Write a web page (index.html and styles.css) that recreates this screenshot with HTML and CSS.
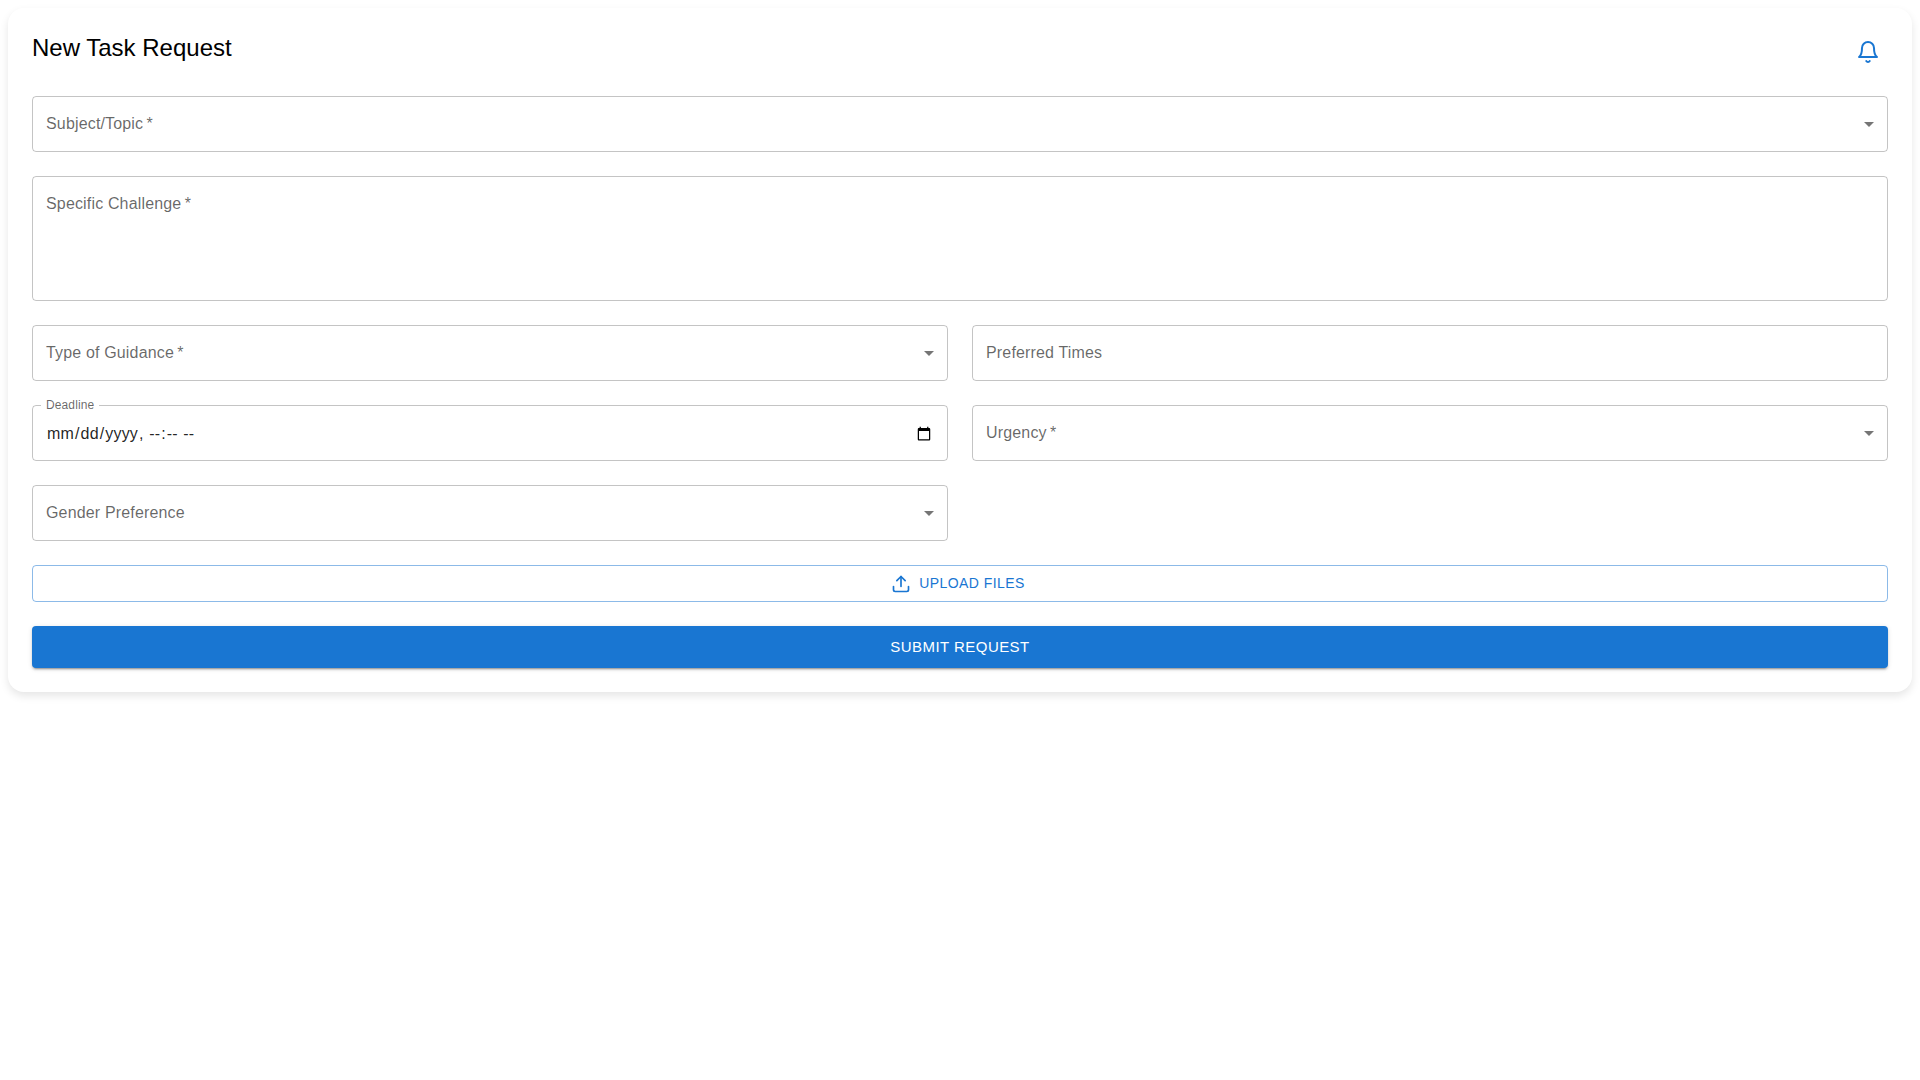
FILE: index.html
```html
<!DOCTYPE html>
<html lang="en">
<head>
  <meta charset="UTF-8">
  <meta name="viewport" content="width=device-width, initial-scale=1.0">
  <title>New Task Request</title>
  <link rel="stylesheet" href="styles.css">
</head>
<body>
  <main class="card">
    <header class="card-header">
      <h1>New Task Request</h1>
      <button type="button" class="icon-button" aria-label="Notifications">
        <svg width="24" height="24" viewBox="0 0 24 24" fill="none" stroke="currentColor" stroke-width="2" stroke-linecap="round" stroke-linejoin="round">
          <path d="M18 8A6 6 0 0 0 6 8c0 7-3 9-3 9h18s-3-2-3-9"/>
          <path d="M13.73 21a2 2 0 0 1-3.46 0"/>
        </svg>
      </button>
    </header>

    <form class="task-form">
      <div class="field wide">
        <label for="subject">Subject/Topic&thinsp;*</label>
        <select id="subject" required>
          <option value=""></option>
        </select>
        <svg class="arrow" viewBox="0 0 24 24"><path d="M7 10l5 5 5-5z"/></svg>
      </div>

      <div class="field wide">
        <label for="challenge">Specific Challenge&thinsp;*</label>
        <textarea id="challenge" required></textarea>
      </div>

      <div class="field">
        <label for="guidance">Type of Guidance&thinsp;*</label>
        <select id="guidance" required>
          <option value=""></option>
        </select>
        <svg class="arrow" viewBox="0 0 24 24"><path d="M7 10l5 5 5-5z"/></svg>
      </div>

      <div class="field">
        <label for="times">Preferred Times</label>
        <input type="text" id="times">
      </div>

      <div class="field">
        <label for="deadline" class="shrink">Deadline</label>
        <input type="datetime-local" id="deadline">
      </div>

      <div class="field">
        <label for="urgency">Urgency&thinsp;*</label>
        <select id="urgency" required>
          <option value=""></option>
        </select>
        <svg class="arrow" viewBox="0 0 24 24"><path d="M7 10l5 5 5-5z"/></svg>
      </div>

      <div class="field">
        <label for="gender">Gender Preference</label>
        <select id="gender">
          <option value=""></option>
        </select>
        <svg class="arrow" viewBox="0 0 24 24"><path d="M7 10l5 5 5-5z"/></svg>
      </div>

      <button type="button" class="btn btn-outlined wide">
        <svg width="20" height="20" viewBox="0 0 24 24" fill="none" stroke="currentColor" stroke-width="2" stroke-linecap="round" stroke-linejoin="round">
          <path d="M21 15v4a2 2 0 0 1-2 2H5a2 2 0 0 1-2-2v-4"/>
          <path d="M17 8l-5-5-5 5"/>
          <path d="M12 3v12"/>
        </svg>
        Upload Files
      </button>

      <button type="submit" class="btn btn-contained wide">Submit Request</button>
    </form>
  </main>
</body>
</html>
```
FILE: styles.css
```css
* {
  box-sizing: border-box;
}

body {
  min-height: 100vh;
  margin: 0;
  padding: 8px;
  background: #fff;
  color: #000;
  font-family: "Liberation Sans", Arial, sans-serif;
  font-size: 16px;
}

.card {
  padding: 24px;
  border-radius: 16px;
  background: #fff;
  box-shadow: 0 4px 8px rgba(0, 0, 0, 0.1);
}

.card-header {
  display: flex;
  justify-content: space-between;
  align-items: flex-start;
  margin-bottom: 24px;
}

h1 {
  margin: 0;
  font-size: 24px;
  font-weight: 400;
  line-height: 32px;
}

.icon-button {
  display: flex;
  padding: 8px;
  border: none;
  border-radius: 50%;
  background: none;
  color: #1976d2;
  cursor: pointer;
}

.icon-button:hover {
  background: rgba(25, 118, 210, 0.04);
}

.task-form {
  display: grid;
  grid-template-columns: 1fr 1fr;
  gap: 24px;
}

.wide {
  grid-column: 1 / -1;
}

.field {
  position: relative;
  display: flex;
}

.field label {
  position: absolute;
  top: 16px;
  left: 14px;
  color: rgba(0, 0, 0, 0.6);
  line-height: 24px;
  letter-spacing: 0.01em;
  pointer-events: none;
}

/* label sitting in the border when the field always shows a value */
.field label.shrink {
  top: -8px;
  left: 9px;
  padding: 0 5px;
  background: #fff;
  font-size: 12px;
  line-height: 16px;
}

.field input,
.field select,
.field textarea {
  width: 100%;
  height: 56px;
  margin: 0;
  padding: 17px 13px 15px;
  border: 1px solid rgba(0, 0, 0, 0.23);
  border-radius: 4px;
  background: transparent;
  color: rgba(0, 0, 0, 0.87);
  font: inherit;
  letter-spacing: 0.01em;
}

.field select {
  appearance: none;
  padding-right: 32px;
}

.field textarea {
  height: 125px;
  line-height: 23px;
  resize: none;
}

.field input:focus,
.field select:focus,
.field textarea:focus {
  border-color: #1976d2;
  outline: none;
}

.arrow {
  position: absolute;
  top: 16px;
  right: 7px;
  width: 24px;
  height: 24px;
  fill: rgba(0, 0, 0, 0.54);
  pointer-events: none;
}

.btn {
  display: flex;
  justify-content: center;
  align-items: center;
  gap: 8px;
  border-radius: 4px;
  font-family: inherit;
  letter-spacing: 0.03em;
  text-transform: uppercase;
  cursor: pointer;
}

.btn svg {
  margin-left: -4px;
}

.btn-outlined {
  padding: 5px 15px;
  border: 1px solid rgba(25, 118, 210, 0.5);
  background: transparent;
  color: #1976d2;
  font-size: 14px;
  line-height: 25px;
}

.btn-contained {
  padding: 8px 22px;
  border: none;
  background: #1976d2;
  color: #fff;
  font-size: 15px;
  line-height: 26px;
  box-shadow: 0 3px 1px -2px rgba(0, 0, 0, 0.2), 0 2px 2px 0 rgba(0, 0, 0, 0.14), 0 1px 5px 0 rgba(0, 0, 0, 0.12);
}

.btn-contained:hover {
  background: #1565c0;
}

@media (max-width: 600px) {
  .task-form {
    grid-template-columns: 1fr;
  }
}
```
